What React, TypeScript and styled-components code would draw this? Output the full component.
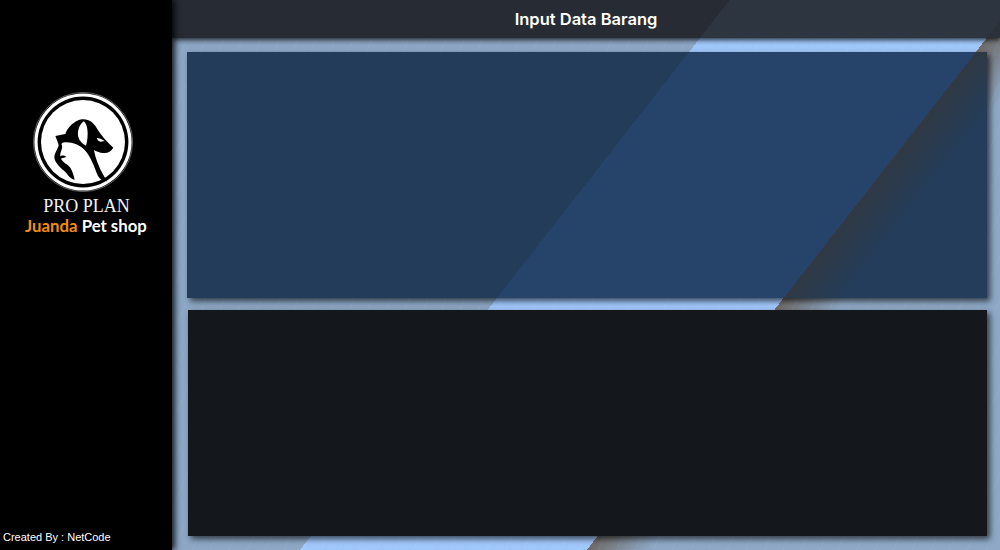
import React from "react";
import styled, { createGlobalStyle } from "styled-components";

const Global = createGlobalStyle`
  html, body { margin: 0; padding: 0; background: #000; }
  #root { width: 1000px; height: 550px; overflow: hidden; }
`;

/* All diagonal bands share the window's geometry through background-attachment: fixed */
const diagonal = (left: string, mid: string, edge: string, right: string) => `
  linear-gradient(128deg, ${left} 0 575px, ${mid} 575px 801px, ${edge} 801px, ${right} 850px) fixed
`;

const Page = styled.div`
  display: flex;
  width: 1000px;
  height: 550px;
  background:
    repeating-linear-gradient(113deg, rgba(255,255,255,.05) 0 1px, transparent 1px 17px) fixed,
    ${diagonal("#8da7c5", "#a1c8fb", "#6f6b68", "#8ea8c6")};
`;

const Sidebar = styled.aside`
  position: relative;
  z-index: 2;
  flex: 0 0 172px;
  display: flex;
  flex-direction: column;
  align-items: center;
  padding-top: 92px;
  box-sizing: border-box;
  background: #000;
  box-shadow: 3px 0 6px rgba(0,0,0,.85);
`;

const Logo = styled.svg`
  width: 100px;
  height: 100px;
  margin-left: -6px;
  flex: none;
`;

const Brand = styled.div`
  margin-top: 4px;
  color: #f2f2f2;
  font: 400 18px/20px "Liberation Serif", serif;
  margin-left: 1px;
`;

const Shop = styled.div`
  color: #fff;
  font: 700 16.8px/20px Lato, "Open Sans", sans-serif;
`;

const Accent = styled.span`
  color: #ef8f12;
`;

const Credit = styled.div`
  margin-top: auto;
  align-self: flex-start;
  padding: 0 0 6px 3px;
  color: #fff;
  font: 400 11px/13px "Liberation Sans", sans-serif;
`;

const Main = styled.main`
  flex: 1;
  display: flex;
  flex-direction: column;
  min-width: 0;
`;

const Header = styled.header`
  position: relative;
  z-index: 1;
  flex: 0 0 38px;
  display: flex;
  align-items: center;
  justify-content: center;
  color: #fff;
  font: 600 16.5px/20px Inter, sans-serif;
  background: ${diagonal("#272c34", "#2d3540", "#2b3139", "#2d3540")};
  box-shadow: 0 2px 5px rgba(0,0,0,.75);
`;

const Content = styled.div`
  flex: 1;
  display: flex;
  flex-direction: column;
  gap: 12px;
  padding: 14px 13px 14px 15px;
  min-height: 0;
`;

const Panel = styled.section<{ $inset?: number; $h: number; $dark?: boolean }>`
  flex: 0 0 ${(p) => p.$h}px;
  margin-left: ${(p) => p.$inset ?? 0}px;
  background: ${(p) =>
    p.$dark ? "#14181d" : diagonal("#223c5a", "#26446a", "#303944", "#233d5b")};
  box-shadow: 3px 3px 6px rgba(0,0,0,.65);
`;

export default function App() {
  return (
    <Page>
      <Global />
      <Sidebar>
        <Logo viewBox="0 0 100 100" role="img" aria-label="Pro Plan logo">
          <circle cx="50" cy="50" r="49.6" fill="none" stroke="#8a8a8a" strokeWidth=".7" />
          <circle cx="50" cy="50" r="48.6" fill="#fff" />
          <circle cx="50" cy="50" r="45.4" fill="#000" />
          <circle cx="50" cy="50" r="42" fill="#fff" />
          <g transform="translate(17 18) scale(.3333)">
            <path
              fill="#000"
              d="M16 78 L46 72 C52 54 72 32 95 28 C115 25 132 38 140 54 C152 76 172 96 190 113 C183 125 172 131 158 129 C150 128 142 125 132 120 C136 145 150 182 172 214 C158 213 150 208 144 198 C132 170 124 142 104 120 C88 104 62 94 38 98 L34 102 C40 112 33 122 31 132 C29 146 38 156 52 164 C64 172 70 190 74 210 C62 206 54 196 48 188 C36 176 20 166 14 148 C10 132 24 118 26 106 C24 96 20 88 16 78 Z"
            />
            <path
              fill="#fff"
              d="M101 34 C90 42 82 60 84 76 C86 90 96 102 108 107 C113 90 115 66 110 48 C108 42 105 37 101 34 Z"
            />
            <path fill="#fff" d="M140 84 L152 86 L164 93 L152 95 C146 94 142 90 140 84 Z" />
            <path fill="#000" d="M29 140 C35 135 43 136 49 141 C42 143 35 145 29 147 Z" />
          </g>
        </Logo>
        <Brand>PRO PLAN</Brand>
        <Shop>
          <Accent>Juanda</Accent> Pet shop
        </Shop>
        <Credit>Created By : NetCode</Credit>
      </Sidebar>
      <Main>
        <Header>Input Data Barang</Header>
        <Content>
          <Panel $h={246} />
          <Panel $h={226} $inset={1} $dark />
        </Content>
      </Main>
    </Page>
  );
}
